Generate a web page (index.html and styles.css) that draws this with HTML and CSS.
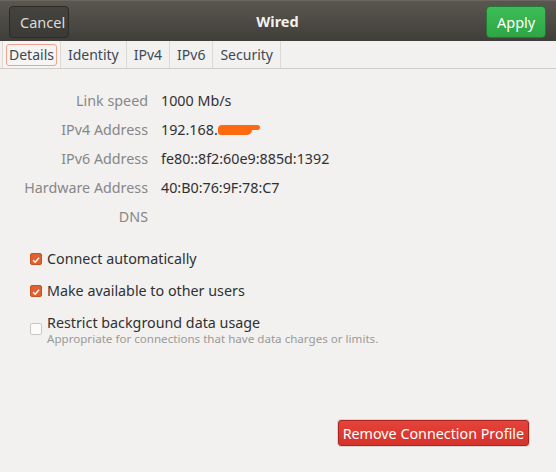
FILE: index.html
```html
<!DOCTYPE html>
<html lang="en">
<head>
	<meta charset="UTF-8">
	<title>Wired</title>
	<link rel="stylesheet" href="styles.css">
</head>
<body>
	<div class="dialog">
		<div class="headerbar">
			<button class="hbtn cancel">Cancel</button>
			<div class="title">Wired</div>
			<button class="hbtn apply">Apply</button>
		</div>
		<div class="tabs">
			<span class="tab active"><span class="focus">Details</span></span>
			<span class="tab">Identity</span>
			<span class="tab">IPv4</span>
			<span class="tab">IPv6</span>
			<span class="tab">Security</span>
		</div>
		<div class="content">
			<div class="info">
				<span class="key">Link speed</span><span class="val">1000 Mb/s</span>
				<span class="key">IPv4 Address</span><span class="val">192.168.<span class="blot"></span></span>
				<span class="key">IPv6 Address</span><span class="val">fe80::8f2:60e9:885d:1392</span>
				<span class="key">Hardware Address</span><span class="val">40:B0:76:9F:78:C7</span>
				<span class="key">DNS</span><span class="val"></span>
			</div>
			<div class="checks">
				<label class="check">
					<span class="box on"><svg viewBox="0 0 12 12" width="12" height="12"><path d="M2.5 6.2 L5 8.6 L9.6 3.4" fill="none" stroke="#fff" stroke-width="1.8"/></svg></span>
					<span class="ctext">Connect automatically</span>
				</label>
				<label class="check">
					<span class="box on"><svg viewBox="0 0 12 12" width="12" height="12"><path d="M2.5 6.2 L5 8.6 L9.6 3.4" fill="none" stroke="#fff" stroke-width="1.8"/></svg></span>
					<span class="ctext">Make available to other users</span>
				</label>
				<label class="check multi">
					<span class="box"></span>
					<span class="ctext"><span class="main">Restrict background data usage</span>
						<small>Appropriate for connections that have data charges or limits.</small>
					</span>
				</label>
			</div>
			<div class="actions">
				<button class="remove">Remove Connection Profile</button>
			</div>
		</div>
	</div>
</body>
</html>
```

FILE: styles.css
```css
body {
	margin: 0;
	font-family: "Noto Sans", "Open Sans", sans-serif;
	font-size: 14.3px;
	color: #3c3c3c;
	background: #f2f1f0;
}
.dialog {
	width: 556px;
	height: 472px;
	display: flex;
	flex-direction: column;
}
.headerbar {
	height: 41px;
	box-sizing: border-box;
	display: flex;
	align-items: center;
	justify-content: space-between;
	padding: 0 10px 0 9px;
	background: linear-gradient(#5a5750, #403e39);
	border-top: 1px solid #6b6760;
}
.hbtn {
	font-family: inherit;
	font-size: 14.5px;
	height: 32px;
	border-radius: 4px;
	padding: 0 10px;
	margin-top: 1px;
}
.cancel {
	width: 60px;
	color: #dcdcd8;
	background: linear-gradient(#45433e, #3c3a36);
	border: 1px solid #2c2b28;
}
.apply {
	width: 60px;
	color: #fff;
	background: linear-gradient(#3dbd56, #2fa546);
	border: 1px solid #237a34;
}
.title {
	color: #f2f1ee;
	font-weight: bold;
	font-size: 14.5px;
}
.tabs {
	height: 27px;
	display: flex;
	align-items: stretch;
	padding-left: 2px;
	border-bottom: 1px solid #cfcdca;
	background: #f2f1f0;
}
.tab {
	display: flex;
	align-items: center;
	padding: 0 7px;
	border-right: 1px solid #dcdad7;
	color: #3d4856;
	font-size: 14px;
}
.tab.active {
	background: #f6f5f4;
	padding: 0 3px;
	border-left: 1px solid #dcdad7;
}
.focus {
	border: 1px solid #f0a48e;
	border-radius: 3px;
	padding: 1px 2px;
	line-height: 18px;
}
.content {
	flex: 1;
	display: flex;
	flex-direction: column;
	padding: 17px 0 0 0;
}
.info {
	display: grid;
	grid-template-columns: 148px auto;
	column-gap: 13px;
	grid-auto-rows: 29px;
	align-items: center;
}
.key {
	text-align: right;
	color: #878787;
}
.val {
	color: #303030;
	display: flex;
	align-items: center;
}
.blot {
	display: inline-block;
	width: 34px;
	height: 10px;
	background: #ff6a10;
	border-radius: 4px 3px 5px 3px;
	margin-top: 1px;
	position: relative;
}
.blot::after {
	content: "";
	position: absolute;
	left: 28px;
	top: 0;
	width: 14px;
	height: 5px;
	background: #ff6a10;
	border-radius: 2px 3px 3px 2px;
}
.checks {
	display: flex;
	flex-direction: column;
	gap: 13px;
	padding: 18px 0 0 30px;
}
.check {
	display: flex;
	align-items: center;
	gap: 5px;
	color: #303030;
	line-height: 19px;
}
.check.multi {
	align-items: flex-start;
	margin-top: 1px;
}
.check.multi .box {
	margin-top: 9px;
}
.check.multi .main {
	display: block;
	line-height: 18px;
}
.box {
	width: 12px;
	height: 12px;
	box-sizing: border-box;
	border: 1px solid #c9c7c4;
	border-radius: 2px;
	background: #fbfbfa;
	display: flex;
	flex-shrink: 0;
}
.box.on {
	background: #e0612f;
	border-color: #c8531f;
}
.ctext small {
	display: block;
	font-size: 11.6px;
	line-height: 13px;
	color: #9a9a98;
}
.actions {
	flex: 1;
	display: flex;
	justify-content: flex-end;
	align-items: flex-end;
	padding: 0 27px 26px 0;
}
.remove {
	font-family: inherit;
	font-size: 14.3px;
	color: #fff;
	height: 26px;
	padding: 0 4px;
	border-radius: 3px;
	background: linear-gradient(#e5423a, #d5322b);
	border: 1px solid #a92620;
	box-shadow: 0 0 0 1px #d7d5d2;
}
```
